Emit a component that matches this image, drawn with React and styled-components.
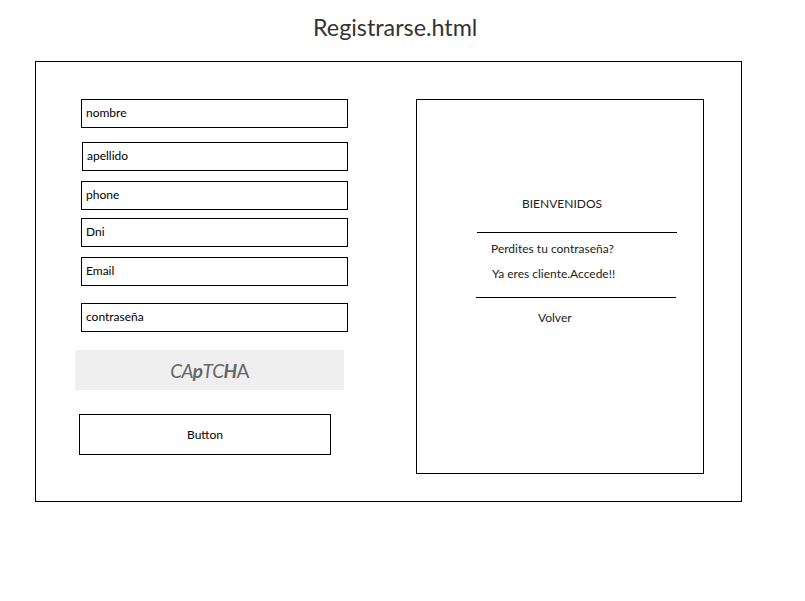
import React from "react";
import styled, { createGlobalStyle } from "styled-components";

const Global = createGlobalStyle`
  html, body { margin: 0; padding: 0; background: #fff; }
  body { font-family: "Source Sans Pro", Lato, "Open Sans", sans-serif; color: #000; }
`;

const Page = styled.div`
  width: 805px;
  height: 601px;
  display: flex;
  flex-direction: column;
`;

const Title = styled.h1`
  margin: 0;
  height: 61px;
  box-sizing: border-box;
  padding: 12px 0 0 313px;
  font-size: 23.3px;
  font-weight: 400;
  color: #333;
  line-height: 30px;
`;

const Frame = styled.div`
  margin-left: 35px;
  width: 707px;
  height: 441px;
  box-sizing: border-box;
  border: 1px solid #000;
  display: flex;
  padding: 37px 0 0 39px;
`;

const LeftCol = styled.div`
  width: 273px;
  display: flex;
  flex-direction: column;
`;

const Field = styled.div`
  box-sizing: border-box;
  width: ${(p) => p.$width ?? 267}px;
  height: 29px;
  margin-top: ${(p) => p.$top}px;
  margin-left: ${(p) => p.$left ?? 6}px;
  border: 1px solid #000;
  padding: 0 0 2px 4px;
  display: flex;
  align-items: center;
  font-size: 12px;
`;

const Captcha = styled.div`
  margin-top: 18px;
  width: 269px;
  height: 40px;
  background: #efefef;
  display: flex;
  align-items: center;
  justify-content: center;
  font-size: 19px;
  letter-spacing: -0.6px;
  color: #666;
`;

const Glyph = styled.span`
  font-style: ${(p) => (p.$italic ? "italic" : "normal")};
  font-weight: ${(p) => (p.$bold ? 700 : 400)};
`;

const Button = styled.div`
  box-sizing: border-box;
  margin: 24px 0 0 4px;
  width: 252px;
  height: 41px;
  border: 1px solid #000;
  display: flex;
  align-items: center;
  justify-content: center;
  font-size: 12px;
`;

const Panel = styled.div`
  margin-left: 68px;
  box-sizing: border-box;
  width: 288px;
  height: 375px;
  border: 1px solid #000;
  display: flex;
  flex-direction: column;
  font-size: 12px;
  color: #222;
`;

const PanelText = styled.div`
  margin-top: ${(p) => p.$top}px;
  margin-left: ${(p) => p.$left}px;
  line-height: 15px;
`;

const Rule = styled.div`
  margin-top: ${(p) => p.$top}px;
  margin-left: ${(p) => p.$left}px;
  width: 200px;
  height: 1px;
  background: #000;
`;

const captcha = [
  ["C", true, false],
  ["A", true, false],
  ["p", true, true],
  ["T", true, false],
  ["C", true, false],
  ["H", true, true],
  ["A", false, false],
];

export default function App() {
  return (
    <Page>
      <Global />
      <Title>Registrarse.html</Title>
      <Frame>
        <LeftCol>
          <Field $top={0}>nombre</Field>
          <Field $top={14} $left={7} $width={266}>apellido</Field>
          <Field $top={10}>phone</Field>
          <Field $top={8}>Dni</Field>
          <Field $top={10}>Email</Field>
          <Field $top={17}>contraseña</Field>
          <Captcha>
            {captcha.map(([c, i, b], k) => (
              <Glyph key={k} $italic={i} $bold={b}>{c}</Glyph>
            ))}
          </Captcha>
          <Button>Button</Button>
        </LeftCol>
        <Panel>
          <PanelText $top={96} $left={105}>BIENVENIDOS</PanelText>
          <Rule $top={21} $left={60} />
          <PanelText $top={8} $left={74}>Perdites tu contraseña?</PanelText>
          <PanelText $top={10} $left={75}>Ya eres cliente.Accede!!</PanelText>
          <Rule $top={16} $left={59} />
          <PanelText $top={12} $left={121}>Volver</PanelText>
        </Panel>
      </Frame>
    </Page>
  );
}
